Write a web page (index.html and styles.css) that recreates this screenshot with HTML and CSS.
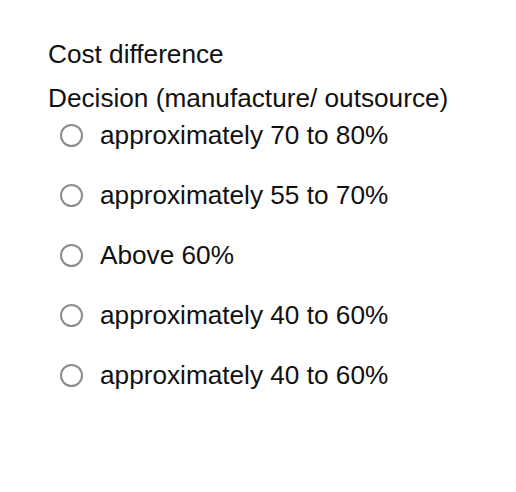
FILE: index.html
```html
<!DOCTYPE html>
<html>
<head>
<meta charset="utf-8">
<link rel="stylesheet" href="styles.css">
</head>
<body>
<div class="quiz">
  <div class="title">Cost difference</div>
  <div class="question">Decision (manufacture/ outsource)</div>
  <div class="options">
    <label class="option"><span class="radio"></span><span>approximately 70 to 80%</span></label>
    <label class="option"><span class="radio"></span><span>approximately 55 to 70%</span></label>
    <label class="option"><span class="radio"></span><span>Above 60%</span></label>
    <label class="option"><span class="radio"></span><span>approximately 40 to 60%</span></label>
    <label class="option"><span class="radio"></span><span>approximately 40 to 60%</span></label>
  </div>
</div>
</body>
</html>
```

FILE: styles.css
```css
html, body {
  margin: 0;
  padding: 0;
  background: #ffffff;
}
body {
  font-family: "Liberation Sans", Arial, Helvetica, sans-serif;
  font-size: 26.2px;
  color: #111111;
}
.quiz {
  padding: 32px 0 0 48px;
}
.title {
  line-height: 44px;
}
.question {
  line-height: 38px;
  margin-top: 3px;
}
.options {
  display: flex;
  flex-direction: column;
  gap: 24px;
}
.option {
  display: flex;
  align-items: center;
  height: 36px;
  line-height: 36px;
  padding-left: 12px;
  gap: 17px;
}
.radio {
  display: block;
  width: 23px;
  height: 23px;
  box-sizing: border-box;
  border: 2px solid #8c8c8c;
  border-radius: 50%;
  background: #fff;
  flex: none;
}
```
